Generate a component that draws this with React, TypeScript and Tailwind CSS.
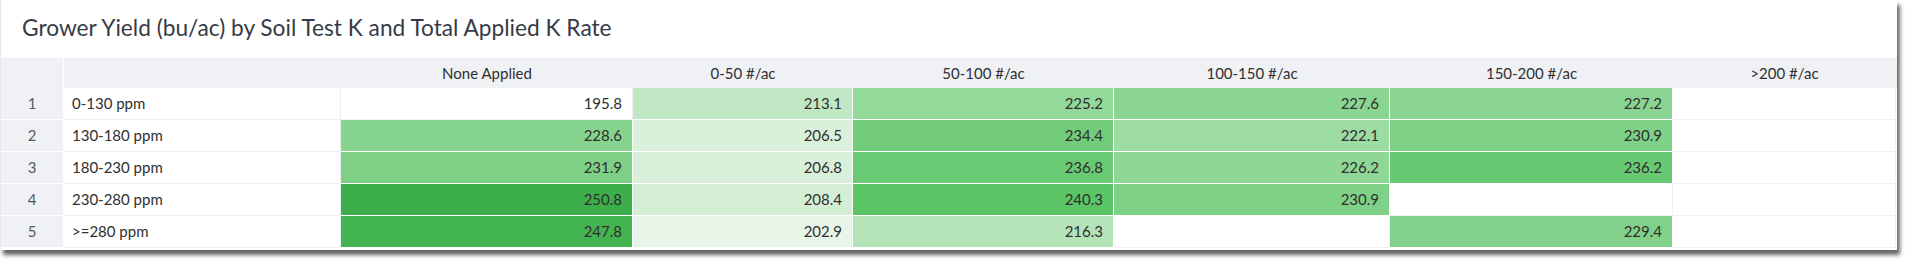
import React from 'react';

type Cell = { v: string; bg: string } | null;

const columns = [
  { label: 'None Applied', w: 'w-[292px]' },
  { label: '0-50 #/ac', w: 'w-[220px]' },
  { label: '50-100 #/ac', w: 'w-[261px]' },
  { label: '100-150 #/ac', w: 'w-[276px]' },
  { label: '150-200 #/ac', w: 'w-[283px]' },
  { label: '>200 #/ac', w: 'w-[223px]' },
];

// heat-map colours picked per cell
const rows: { label: string; cells: Cell[] }[] = [
  {
    label: '0-130 ppm',
    cells: [
      { v: '195.8', bg: 'bg-white' },
      { v: '213.1', bg: 'bg-[#c1e8c5]' },
      { v: '225.2', bg: 'bg-[#93d99a]' },
      { v: '227.6', bg: 'bg-[#8ad592]' },
      { v: '227.2', bg: 'bg-[#8bd593]' },
      null,
    ],
  },
  {
    label: '130-180 ppm',
    cells: [
      { v: '228.6', bg: 'bg-[#87d48f]' },
      { v: '206.5', bg: 'bg-[#d9f1db]' },
      { v: '234.4', bg: 'bg-[#72cc7b]' },
      { v: '222.1', bg: 'bg-[#9ddca3]' },
      { v: '230.9', bg: 'bg-[#7fd188]' },
      null,
    ],
  },
  {
    label: '180-230 ppm',
    cells: [
      { v: '231.9', bg: 'bg-[#7ed087]' },
      { v: '206.8', bg: 'bg-[#d8f0da]' },
      { v: '236.8', bg: 'bg-[#6ac973]' },
      { v: '226.2', bg: 'bg-[#8fd796]' },
      { v: '236.2', bg: 'bg-[#69c972]' },
      null,
    ],
  },
  {
    label: '230-280 ppm',
    cells: [
      { v: '250.8', bg: 'bg-[#3cae4a]' },
      { v: '208.4', bg: 'bg-[#d3eed5]' },
      { v: '240.3', bg: 'bg-[#5bc465]' },
      { v: '230.9', bg: 'bg-[#7fd188]' },
      null,
      null,
    ],
  },
  {
    label: '>=280 ppm',
    cells: [
      { v: '247.8', bg: 'bg-[#42b550]' },
      { v: '202.9', bg: 'bg-[#e6f5e7]' },
      { v: '216.3', bg: 'bg-[#b3e3b7]' },
      null,
      { v: '229.4', bg: 'bg-[#81d18a]' },
      null,
    ],
  },
];

export default function App() {
  return (
    <div className="w-[1912px] h-[268px] bg-white font-['Lato','Liberation_Sans',sans-serif]">
      <div className="w-[1897px] border-l border-[#e6e7ea] bg-white pb-[2px] shadow-[3px_5px_4px_rgba(0,0,0,0.6)]">
        <h1 className="pl-[21px] pt-[15px] pb-[17px] text-[22.7px] leading-[26px] text-[#363b46]">
          Grower Yield (bu/ac) by Soil Test K and Total Applied K Rate
        </h1>

        <div className="flex h-[30px] bg-[#f0f1f4] text-[15px] text-[#2f2f2f]">
          <div className="w-[63px] border-r border-white" />
          <div className="w-[277px]" />
          {columns.map((c) => (
            <div key={c.label} className={`${c.w} flex items-center justify-center`}>
              {c.label}
            </div>
          ))}
        </div>

        {rows.map((r, i) => (
          <div key={r.label} className="flex h-[32px] text-[15px] text-[#2f2f2f]">
            <div className="w-[63px] flex items-center justify-center bg-[#f0f1f4] border-r border-b border-white text-[#555a60]">
              {i + 1}
            </div>
            <div className="w-[277px] flex items-center pl-[8px] border-r border-b border-[#eceef0]">
              {r.label}
            </div>
            {r.cells.map((c, j) => (
              <div
                key={j}
                className={`${columns[j].w} flex items-center justify-end pr-[10px] border-r border-b ${
                  c && c.bg !== 'bg-white' ? `${c.bg} border-white` : 'bg-white border-[#eff0f2]'
                }`}
              >
                {c?.v}
              </div>
            ))}
          </div>
        ))}
      </div>
    </div>
  );
}
